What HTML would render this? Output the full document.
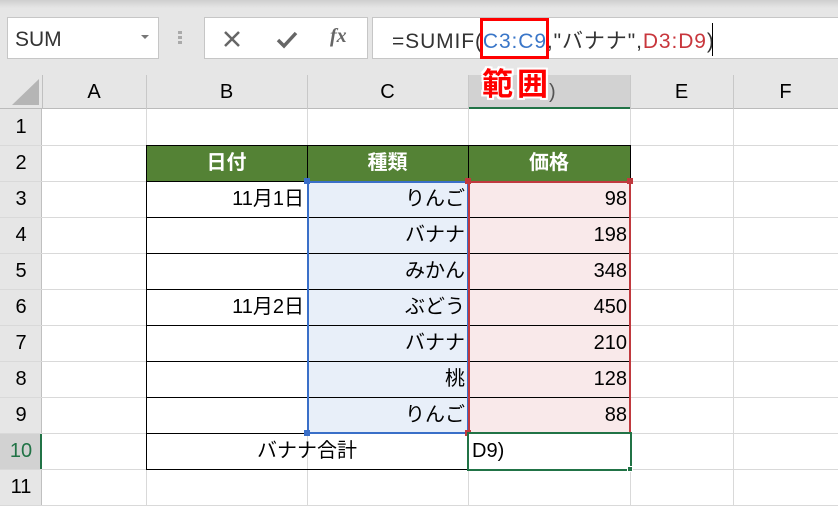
<!DOCTYPE html>
<html><head><meta charset="utf-8"><style>
*{margin:0;padding:0;box-sizing:border-box}
body{width:838px;height:506px;overflow:hidden;background:#fff;position:relative;font-family:"Liberation Sans","Noto Sans CJK JP",sans-serif;color:#000}
.a{position:absolute}
.t{font-size:20px;line-height:36px;white-space:nowrap}
</style></head><body>
<div class="a" style="left:0;top:0;width:838px;height:75px;background:#e6e6e6"></div>
<div class="a" style="left:0;top:0;width:838px;height:8px;background:linear-gradient(#cfcfcf,#e6e6e6)"></div>
<div class="a" style="left:7px;top:17px;width:152px;height:42px;background:#fff;border:1px solid #c6c6c6"></div>
<div class="a" style="left:15px;top:28px;font-size:21px;color:#333">SUM</div>
<div class="a" style="left:141px;top:35px;width:0;height:0;border-left:4px solid transparent;border-right:4px solid transparent;border-top:4px solid #777"></div>
<div class="a" style="left:178px;top:31px;width:4px;height:14px;background:repeating-linear-gradient(#aaa 0 3px,transparent 3px 5px)"></div>
<div class="a" style="left:204px;top:17px;width:164px;height:42px;background:#fff;border:1px solid #c6c6c6"></div>
<svg class="a" style="left:222px;top:29px" width="20" height="20"><path d="M3 3L17 17M17 3L3 17" stroke="#666" stroke-width="2.5"/></svg>
<svg class="a" style="left:275px;top:29px" width="24" height="20"><path d="M3 11L9 17L21 4" stroke="#666" stroke-width="3.5" fill="none"/></svg>
<div class="a" style="left:330px;top:25px;font-family:'Liberation Serif',serif;font-style:italic;font-weight:bold;font-size:20px;color:#666">fx</div>
<div class="a" style="left:372px;top:17px;width:466px;height:42px;background:#fff;border:1px solid #c6c6c6;border-right:none"></div>
<div class="a" style="left:392px;top:25px;font-size:21px;letter-spacing:0.9px;color:#333;white-space:nowrap">=SUMIF(<span style="color:#3a76c8">C3:C9</span>,"バナナ",<span style="color:#c8363c">D3:D9</span>)</div>
<div class="a" style="left:712px;top:23px;width:1px;height:33px;background:#000"></div>
<div class="a" style="left:480px;top:18px;width:69px;height:41px;border:3px solid #f00"></div>
<div class="a" style="left:0;top:75px;width:838px;height:34px;background:#e6e6e6;border-bottom:1px solid #bbb"></div>
<div class="a" style="left:468px;top:75px;width:162px;height:34px;background:#d2d2d2;border-bottom:2px solid #217346"></div>
<svg class="a" style="left:0;top:75px" width="42" height="34"><path d="M39 4L39 30L12 30Z" fill="#b5b5b5"/></svg>
<div class="a" style="left:42px;top:75px;width:1px;height:34px;background:#c0c0c0"></div>
<div class="a" style="left:146px;top:75px;width:1px;height:34px;background:#c8c8c8"></div>
<div class="a" style="left:307px;top:75px;width:1px;height:34px;background:#c8c8c8"></div>
<div class="a" style="left:468px;top:75px;width:1px;height:34px;background:#c8c8c8"></div>
<div class="a" style="left:630px;top:75px;width:1px;height:34px;background:#c8c8c8"></div>
<div class="a" style="left:733px;top:75px;width:1px;height:34px;background:#c8c8c8"></div>
<div class="a t" style="left:42px;top:74px;width:104px;text-align:center">A</div>
<div class="a t" style="left:146px;top:74px;width:161px;text-align:center">B</div>
<div class="a t" style="left:307px;top:74px;width:161px;text-align:center">C</div>
<div class="a t" style="left:549px;top:74px;color:#555">)</div>
<div class="a t" style="left:630px;top:74px;width:103px;text-align:center">E</div>
<div class="a t" style="left:733px;top:74px;width:105px;text-align:center">F</div>
<div class="a" style="left:482px;top:64px;font-size:31px;font-weight:bold;color:#f00;letter-spacing:4px;line-height:42px;text-shadow:2px 0 #fff,-2px 0 #fff,0 2px #fff,0 -2px #fff,2px 2px #fff,-2px -2px #fff,2px -2px #fff,-2px 2px #fff">範囲</div>
<div class="a" style="left:0;top:109px;width:42px;height:397px;background:#e6e6e6;border-right:1px solid #c0c0c0"></div>
<div class="a" style="left:0;top:433px;width:42px;height:36px;background:#d2d2d2;border-right:2px solid #217346"></div>
<div id="g"></div>
<script>
let h='';
for(let i=0;i<11;i++){let y=109+i*36;
h+=`<div class="a t" style="left:0;top:${y}px;width:42px;text-align:center;${i==9?'color:#217346':''}">${i+1}</div>`;
h+=`<div class="a" style="left:0;top:${y+36}px;width:838px;height:1px;background:#d9d9d9"></div>`;}
[146,307,468,630,733].forEach(x=>h+=`<div class="a" style="left:${x}px;top:109px;width:1px;height:397px;background:#d9d9d9"></div>`);
document.getElementById('g').outerHTML=h;
</script>
<div class="a" style="left:146px;top:145px;width:484px;height:36px;background:#548235"></div>
<div class="a" style="left:307px;top:181px;width:161px;height:252px;background:#e8eff9"></div>
<div class="a" style="left:468px;top:181px;width:162px;height:252px;background:#f9e9ea"></div>
<script>
let s='';
for(let i=0;i<=9;i++){let y=145+i*36;s+=`<div class="a" style="left:146px;top:${y}px;width:485px;height:1px;background:#000"></div>`;}
s+=`<div class="a" style="left:146px;top:469px;width:322px;height:1px;background:#000"></div>`;
[146,307,468,630].forEach(x=>s+=`<div class="a" style="left:${x}px;top:145px;width:1px;height:${x==307?288:x==630?288:324}px;background:#000"></div>`);
const c=[['11月1日','りんご','98'],['','バナナ','198'],['','みかん','348'],['11月2日','ぶどう','450'],['','バナナ','210'],['','桃','128'],['','りんご','88']];
c.forEach((r,i)=>{let y=181+i*36;
s+=`<div class="a t" style="left:146px;top:${y}px;width:158px;text-align:right">${r[0]}</div>`;
s+=`<div class="a t" style="left:307px;top:${y}px;width:158px;text-align:right">${r[1]}</div>`;
s+=`<div class="a t" style="left:468px;top:${y}px;width:159px;text-align:right">${r[2]}</div>`;});
document.write(s);
</script>
<div class="a t" style="left:146px;top:145px;width:161px;text-align:center;color:#fff;font-weight:bold">日付</div>
<div class="a t" style="left:307px;top:145px;width:161px;text-align:center;color:#fff;font-weight:bold">種類</div>
<div class="a t" style="left:468px;top:145px;width:162px;text-align:center;color:#fff;font-weight:bold">価格</div>
<div class="a" style="left:307px;top:181px;width:162px;height:253px;border:2px solid #3a6fc8"></div>
<div class="a" style="left:468px;top:181px;width:163px;height:253px;border:2px solid #c0393e"></div>
<div class="a" style="left:304px;top:178px;width:6px;height:6px;background:#3a6fc8"></div>
<div class="a" style="left:304px;top:430px;width:6px;height:6px;background:#3a6fc8"></div>
<div class="a" style="left:465px;top:178px;width:6px;height:6px;background:#c0393e"></div>
<div class="a" style="left:627px;top:178px;width:6px;height:6px;background:#c0393e"></div>
<div class="a" style="left:465px;top:430px;width:6px;height:6px;background:#c0393e"></div>
<div class="a t" style="left:146px;top:433px;width:322px;text-align:center">バナナ合計</div>
<div class="a" style="left:467px;top:432px;width:165px;height:39px;border:2px solid #217346;background:#fff"></div>
<div class="a" style="left:627px;top:466px;width:6px;height:6px;background:#217346;border:1px solid #fff"></div>
<div class="a t" style="left:472px;top:433px">D9)</div>
</body></html>
